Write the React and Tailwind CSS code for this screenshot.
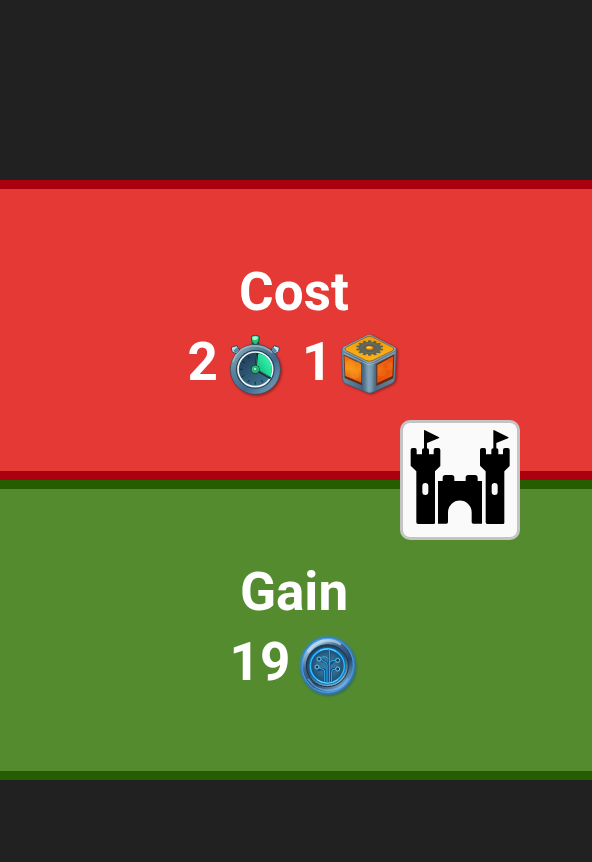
import React from "react";

function Stopwatch() {
  return (
    <svg role="img" aria-label="Time" viewBox="15 21 180 180" className="mt-2 size-15 shrink-0 overflow-visible">
      <defs>
        <linearGradient id="watchRim" x1="0" y1="0" x2="1" y2="1">
          <stop offset="0" stopColor="#9fbfca" />
          <stop offset="0.3" stopColor="#5c8499" />
          <stop offset="0.6" stopColor="#416890" />
          <stop offset="0.85" stopColor="#6a93ad" />
          <stop offset="1" stopColor="#8fb0be" />
        </linearGradient>
        <linearGradient id="watchFace" x1="0" y1="0" x2="0.8" y2="1">
          <stop offset="0" stopColor="#1b3552" />
          <stop offset="1" stopColor="#3f7590" />
        </linearGradient>
        <linearGradient id="watchSlice" x1="0" y1="1" x2="1" y2="0">
          <stop offset="0" stopColor="#149c6c" />
          <stop offset="0.5" stopColor="#1fdc96" />
          <stop offset="1" stopColor="#4ffabb" />
        </linearGradient>
        <filter id="watchShadow" x="-20%" y="-20%" width="140%" height="140%" colorInterpolationFilters="sRGB">
          <feDropShadow dx="4" dy="4" stdDeviation="3" floodColor="#5d1010" floodOpacity="0.6" />
        </filter>
      </defs>
      <g filter="url(#watchShadow)">
        <path d="M94 42h18v13H94zM45 70l12 15 12-10-14-12zM161 70l-12 15-12-10 14-12z" fill="#3c5a6e" stroke="#1c2c39" strokeWidth="2" />
        <circle cx="103" cy="124" r="75" fill="url(#watchRim)" stroke="#2c4a60" strokeWidth="2" />
      </g>
      <path d="M36 102Q49 60 91 54Q128 50 154 74" fill="none" stroke="#b5d1d8" strokeWidth="5" opacity="0.55" />
      <path d="M31 58l16-5 8 13-10 11-12-6z" fill="#c4e2f4" stroke="#20394c" strokeWidth="2.5" />
      <path d="M37 68l11-10 5 8-9 9z" fill="#5687a4" />
      <path d="M175 58l-16-5-8 13 10 11 12-6z" fill="#cce7f8" stroke="#20394c" strokeWidth="2.5" />
      <path d="M168 69l-11-11-5 8 9 9z" fill="#5687a4" />
      <path d="M91 26q3-4 12-4t12 4l-1 13-7 10h-8l-7-10z" fill="#22c47b" stroke="#124a3b" strokeWidth="2.5" />
      <path d="M94 27q9-5 17 0l-2 7q-8 5-15 0z" fill="#a5f9d2" />
      <circle cx="103" cy="124" r="58" fill="#243f58" />
      <circle cx="103" cy="124" r="52" fill="url(#watchFace)" stroke="#edf8f8" strokeWidth="5" />
      <path d="M103 124L112 76Q143 82 151 110Q154 128 149 148Z" fill="url(#watchSlice)" />
      <path d="M57 124h9M65 101l7 4M81 84l5 7M62 147l8-5M80 163l5-7M103 170v-9M126 164l-5-8" stroke="#10243a" strokeWidth="2.5" />
      <path d="M77 103l26 21-20 29" fill="none" stroke="#3d6480" strokeWidth="1" />
      <path d="M103 124L109 75M103 124L149 151" stroke="#0d2a2c" strokeWidth="6" />
      <path d="M104 119l4-37M109 125l35 22" stroke="#3f7478" strokeWidth="2" />
      <circle cx="103" cy="124" r="13" fill="#103d38" />
      <circle cx="103" cy="124" r="10" fill="#23a969" stroke="#49e69b" strokeWidth="2" />
      <circle cx="102" cy="123" r="4" fill="#95f6bd" />
    </svg>
  );
}

function Crate() {
  const teeth = Array.from({ length: 14 }, (_, i) => i * (360 / 14));
  return (
    <svg role="img" aria-label="Goods" viewBox="18 21 180 180" className="mt-2 size-15 shrink-0 overflow-visible">
      <defs>
        <linearGradient id="crateFrame" x1="0" y1="0" x2="1" y2="0">
          <stop offset="0" stopColor="#6b8da6" />
          <stop offset="0.38" stopColor="#456480" />
          <stop offset="0.5" stopColor="#7fa0b5" />
          <stop offset="0.62" stopColor="#4c6c84" />
          <stop offset="1" stopColor="#6e8798" />
        </linearGradient>
        <linearGradient id="crateTop" x1="0" y1="0" x2="0" y2="1">
          <stop offset="0" stopColor="#f09a0a" />
          <stop offset="1" stopColor="#ffb217" />
        </linearGradient>
        <linearGradient id="crateLeft" x1="0" y1="0" x2="0" y2="1">
          <stop offset="0" stopColor="#ea6a0c" />
          <stop offset="0.5" stopColor="#f78f14" />
          <stop offset="1" stopColor="#e45a10" />
        </linearGradient>
        <linearGradient id="crateRight" x1="0" y1="0" x2="1" y2="1">
          <stop offset="0" stopColor="#f08013" />
          <stop offset="0.5" stopColor="#ea500c" />
          <stop offset="1" stopColor="#ed680d" />
        </linearGradient>
        <filter id="crateShadow" x="-20%" y="-20%" width="140%" height="140%" colorInterpolationFilters="sRGB">
          <feDropShadow dx="4" dy="3" stdDeviation="3" floodColor="#5d1010" floodOpacity="0.6" />
        </filter>
      </defs>
      <path d="M97 23Q106 18 115 23L181 57Q188 61 187 69L183 153Q182 161 175 166L117 193Q107 198 97 193L35 167Q27 163 26 155L23 71Q22 61 30 56Z" fill="url(#crateFrame)" stroke="#3d586c" strokeWidth="2" filter="url(#crateShadow)" />
      <path d="M97 23Q106 18 115 23L181 57Q190 63 180 70L118 103Q107 108 96 103L31 70Q22 63 30 56Z" fill="#8aa3b1" />
      <path d="M97 27Q106 22 115 27L174 57Q184 63 174 69L117 97Q106 102 95 97L38 69Q28 63 38 57Z" fill="url(#crateTop)" stroke="#77510e" strokeWidth="2" />
      <g transform="translate(107 60) scale(1 .56)">
        {teeth.map((angle) => (
          <rect key={angle} x="-5" y="-41" width="10" height="15" rx="2" fill="#5f6355" transform={`rotate(${angle})`} />
        ))}
        <circle r="34" fill="#5f6355" />
        <circle r="25" fill="none" stroke="#6e7160" strokeWidth="3" />
        <circle r="12" fill="#ed9108" stroke="#3e4a49" strokeWidth="2" />
        <ellipse cx="-2" cy="-3" rx="8" ry="5" fill="#ffd26a" />
      </g>
      <path d="M29 80l55 27v65l-52-22z" fill="#672616" />
      <path d="M31 83l51 25v56l-48-20z" fill="url(#crateLeft)" />
      <path d="M34 102l14-7 14 9v18l-14 7-13-8zM62 106l12-7 7 6M63 122l11 8v18l-11 6-14-7v-17z" fill="#ffb52b" opacity="0.25" />
      <path d="M127 108l54-29-3 72-51 23z" fill="#672616" />
      <path d="M130 111l48-26-3 59-45 21z" fill="url(#crateRight)" />
      <path d="M131 122l14-7 12 7-1 17-13 8-12-6zM158 107l13-7 5 5-1 18-12 5-6-4z" fill="#ffab1e" opacity="0.2" />
      <path d="M95 107q12 4 24 0l-4 78q-8 7-16 0z" fill="#8fb2c6" opacity="0.3" />
      <path d="M29 76l67 31q10 5 22 0l64-32" fill="none" stroke="#b1c8d3" strokeWidth="3" opacity="0.6" />
    </svg>
  );
}

function CircuitCoin() {
  return (
    <svg role="img" aria-label="Circuit coins" viewBox="18 15 180 180" className="mt-2 size-15 shrink-0 overflow-visible">
      <defs>
        <linearGradient id="coinOuter" x1="0" y1="0" x2="0.7" y2="1">
          <stop offset="0" stopColor="#6f9fc4" />
          <stop offset="0.2" stopColor="#9cc4de" />
          <stop offset="0.4" stopColor="#416a90" />
          <stop offset="0.7" stopColor="#25486a" />
          <stop offset="1" stopColor="#74a7d2" />
        </linearGradient>
        <linearGradient id="coinInner" x1="0" y1="0" x2="0.5" y2="1">
          <stop offset="0" stopColor="#1a3350" />
          <stop offset="0.6" stopColor="#34546e" />
          <stop offset="1" stopColor="#86a9bc" />
        </linearGradient>
        <radialGradient id="coinFace">
          <stop offset="0" stopColor="#3f82ac" />
          <stop offset="0.6" stopColor="#34688a" />
          <stop offset="1" stopColor="#1b4a70" />
        </radialGradient>
        <filter id="coinGlow" x="-20%" y="-20%" width="140%" height="140%" colorInterpolationFilters="sRGB">
          <feGaussianBlur stdDeviation="3" />
        </filter>
      </defs>
      <ellipse cx="110" cy="111" rx="84" ry="87" fill="#174b65" opacity="0.5" filter="url(#coinGlow)" />
      <ellipse cx="107" cy="106" rx="82" ry="86" fill="#2f86f0" filter="url(#coinGlow)" />
      <ellipse cx="107" cy="106" rx="77" ry="81" fill="url(#coinOuter)" stroke="#4a9bf0" strokeWidth="3" />
      <path d="M50 64Q70 33 108 31Q128 31 144 42" fill="none" stroke="#d2ecf8" strokeWidth="8" opacity="0.55" strokeLinecap="round" />
      <path d="M49 148Q70 180 108 181Q147 180 167 147" fill="none" stroke="#7cbcf5" strokeWidth="5" opacity="0.6" strokeLinecap="round" />
      <circle cx="106" cy="107" r="63" fill="url(#coinInner)" stroke="#15324f" strokeWidth="3" />
      <circle cx="106" cy="108" r="52" fill="url(#coinFace)" stroke="#0a6fb8" strokeWidth="8" />
      <circle cx="106" cy="108" r="51" fill="none" stroke="#29bffb" strokeWidth="4" />
      <path d="M83 62Q108 50 132 64M75 149Q106 170 138 149" fill="none" stroke="#93e7ff" strokeWidth="2" />
      <path d="M112 59v98M105 157v-53q0-8-11-9l-11-9M98 155v-29q0-8-9-9l-13 4M119 156v-30q0-9 11-9M119 103q-1-12 10-12" fill="none" stroke="#134a78" strokeWidth="7" />
      <path d="M112 59v98M105 157v-53q0-8-11-9l-7-6M98 155v-29q0-8-9-10l-8-3M119 156v-30q0-9 11-9M112 103q1-13 19-12M88 82q14-5 20 4" fill="none" stroke="#2fb4f5" strokeWidth="3" />
      {[[81, 87], [75, 111], [137, 91], [137, 117]].map(([x, y]) => (
        <circle key={`${x}-${y}`} cx={x} cy={y} r="6" fill="#173d5c" stroke="#63cbf5" strokeWidth="3" />
      ))}
    </svg>
  );
}

function CastleIcon() {
  return (
    <svg aria-hidden="true" viewBox="27 27 342 342" className="size-full" fill="#000">
      <g id="tower">
        <path d="M90 50q0-3 3-1l41 20q4 3 0 4L99 87v16q6 0 6 5v13h14v-13q0-6 6-6h8q6 0 6 6v48l-16 16v154q0 4-4 4H72q-5 0-5-5V172l-17-17v-47q0-6 6-6h7q5 0 5 6v13h16v-13q0-5 6-5z" />
        <rect x="85" y="207" width="18" height="36" rx="9" fill="#fafafa" />
      </g>
      <use href="#tower" x="208" />
      <path d="M132 201h14v-10q0-8 8-8h19q8 0 8 8v10h34v-10q0-8 8-8h20q8 0 8 8v10h13v128h-26q-5 0-5-5v-29a35.500 35.500 0 0 0-71 0v29q0 5-5 5h-25z" />
    </svg>
  );
}

function Amount({ value, children }) {
  return (
    <div className="flex gap-2">
      <span>{value}</span>
      {children}
    </div>
  );
}

function Panel({ title, className, children }) {
  return (
    <section className={`flex min-h-[300px] flex-col items-center justify-center border-y-[9px] pr-1 ${className}`}>
      <h2>{title}</h2>
      <div className="flex min-h-19 gap-4">{children}</div>
    </section>
  );
}

export default function App() {
  return (
    <main className="min-h-screen bg-[#212121] pt-[180px] pb-20 font-['Roboto',sans-serif] text-[53px] leading-[70px] font-bold text-white">
      <div className="relative">
        <Panel title="Cost" className="border-[#ab000d] bg-[#e53935]">
          <Amount value={2}><Stopwatch /></Amount>
          <Amount value={1}><Crate /></Amount>
        </Panel>
        <Panel title="Gain" className="border-[#255d00] bg-[#558b2f]">
          <Amount value={19}><CircuitCoin /></Amount>
        </Panel>
        <button type="button" aria-label="Castle" className="absolute top-1/2 right-[72px] size-30 -translate-y-1/2 rounded-[10px] border-3 border-[#c4c4c4] bg-[#fafafa]">
          <CastleIcon />
        </button>
      </div>
    </main>
  );
}
